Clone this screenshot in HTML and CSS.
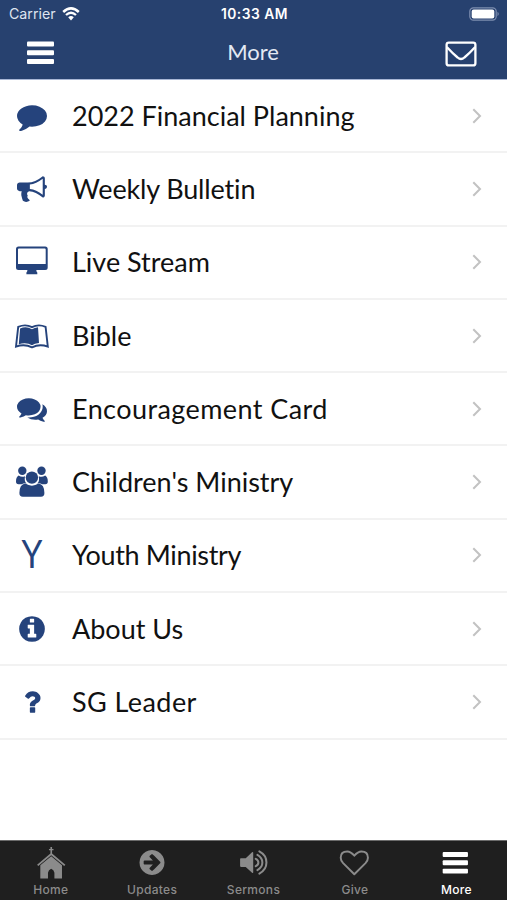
FILE: index.html
```
<!DOCTYPE html>
<html lang="en">
<head>
  <meta charset="UTF-8">
  <meta name="viewport" content="width=device-width, initial-scale=1.0">
  <title>More</title>
  <link rel="stylesheet" href="styles.css">
</head>
<body>
  <div class="app">
    <header class="header">
      <!-- Status bar -->
      <div class="status-bar">
        <div class="carrier">
          <span>Carrier</span>
          <svg class="wifi" viewBox="0 0 18 14" width="18" height="14">
            <path d="M1.2 5Q9-2.2 16.8 5" fill="none" stroke="currentColor" stroke-width="2.5"/>
            <path d="M4 8Q9 3.4 14 8" fill="none" stroke="currentColor" stroke-width="2.3"/>
            <path d="M6.2 10.3Q9 7.8 11.8 10.3L9 13.4z" fill="currentColor"/>
          </svg>
        </div>
        <span class="time">10:33 AM</span>
        <svg class="battery" viewBox="0 0 31 14" width="31" height="14">
          <rect x="0.8" y="0.8" width="26.4" height="12.4" rx="3.6" fill="none" stroke="#7e8eb0" stroke-width="1.2"/>
          <rect x="2.7" y="2.5" width="22.6" height="9" rx="2" fill="#fff"/>
          <path d="M28.5 4.8Q31 7 28.5 9.2z" fill="#7e8eb0"/>
        </svg>
      </div>
      <!-- Navigation bar -->
      <div class="nav-bar">
        <svg class="menu-icon" viewBox="0 0 27 24" width="27" height="24">
          <rect x="0" y="0.5" width="27" height="5" rx="1"/>
          <rect x="0" y="9.2" width="27" height="5" rx="1"/>
          <rect x="0" y="18" width="27" height="5" rx="1"/>
        </svg>
        <h1 class="title">More</h1>
        <svg class="mail-icon" viewBox="0 0 32 26" width="32" height="26" fill="none" stroke="#fff" stroke-width="2.3">
          <rect x="1.6" y="1.6" width="28.8" height="22.8" rx="2.2"/>
          <path d="M1.8 6C5 9.500 9 13.500 12.600 16.500Q16 19.500 19.400 16.500C23 13.500 27 9.500 30.200 6"/>
        </svg>
      </div>
    </header>

    <ul class="menu">
      <li class="menu-item">
        <span class="item-icon"><svg viewBox="0 0 1792 1792" width="30" height="30"><path d="M1792 896q0 174-120 321.500t-326 233-450 85.500q-70 0-145-8-198 175-460 242-49 14-114 22-17 2-30.500-9t-17.500-29v-1q-3-4-.5-12t2-10 4.500-9.500l6-9 7-8.500 8-9q7-8 31-34.500t34.500-38 31-39.500 32.500-51 27-59 26-76q-157-89-247.500-220t-90.500-281q0-130 71-248.500t191-204.500 286-136.500 348-50.500q244 0 450 85.500t326 233 120 321.500z"/></svg></span>
        <span class="label">2022 Financial Planning</span>
        <svg class="chevron" viewBox="0 0 10 16" width="10" height="16"><path d="M1.300 1.300L8 8l-6.700 6.700"/></svg>
      </li>
      <li class="menu-item">
        <span class="item-icon"><svg viewBox="0 0 1792 1792" width="30" height="30"><path d="M1664 640q53 0 90.500 37.500t37.500 90.500-37.500 90.500-90.500 37.500v384q0 52-38 90t-90 38q-417-347-812-380-58 19-91 66t-31 100.500 40 92.500q-20 33-23 65.500t6 58 33.500 55 48 50 61.500 50.500q-29 58-111.500 83t-168.500 11.500-132-55.500q-7-23-29.500-87.500t-32-94.500-23-89-15-101 3.500-98.500 22-110.500h-122q-66 0-113-47t-47-113v-192q0-66 47-113t113-47h480q435 0 896-384 52 0 90 38t38 90v384zm-128 604v-954q-394 302-768 343v270q377 42 768 341z"/></svg></span>
        <span class="label tight">Weekly Bulletin</span>
        <svg class="chevron" viewBox="0 0 10 16" width="10" height="16"><path d="M1.300 1.300L8 8l-6.700 6.700"/></svg>
      </li>
      <li class="menu-item">
        <span class="item-icon"><svg viewBox="0 0 36 36" width="36" height="36"><path fill-rule="evenodd" d="M4.500 2.500h26.700q2.500 0 2.500 2.500v18.600q0 2.500-2.500 2.500h-8.900q0 1.800 1 2.400v1.700H12.400v-1.700q1-.6 1-2.400H4.500Q2 26.100 2 23.600V5q0-2.500 2.500-2.500zM4.900 4.500Q4 4.500 4 5.400V20h27.700V5.400q0-.9-.9-.9z"/></svg></span>
        <span class="label">Live Stream</span>
        <svg class="chevron" viewBox="0 0 10 16" width="10" height="16"><path d="M1.300 1.300L8 8l-6.700 6.700"/></svg>
      </li>
      <li class="menu-item">
        <span class="item-icon"><svg viewBox="0 0 36 36" width="36" height="36">
          <path d="M4.200 8.900Q11.500 5.700 18 9.200Q24.500 5.700 31.600 8.900L33.800 28.600Q25.500 25.600 18 29.300Q10.500 25.600 2 28.600z" fill="none" stroke="#25437c" stroke-width="1.900"/>
          <path d="M6.100 10.500Q12.500 7.900 18 11.300Q20.500 9.700 24 9.300L25 25Q20.500 25.200 18 27.300Q12.500 24 4.800 26.200z"/>
        </svg></span>
        <span class="label">Bible</span>
        <svg class="chevron" viewBox="0 0 10 16" width="10" height="16"><path d="M1.300 1.300L8 8l-6.700 6.700"/></svg>
      </li>
      <li class="menu-item">
        <span class="item-icon"><svg viewBox="0 0 1792 1792" width="30" height="30"><path d="M1408 768q0 139-94 257t-256.500 186.500-353.500 68.500q-86 0-176-16-124 88-278 128-36 9-86 16h-3q-11 0-20.500-8t-11.500-21q-1-3-1-6.500t.5-6.500 2-6l2.500-5 3.500-5.500 4-5 4.500-5 4-4.500q5-6 23-25t26-29.500 22.500-29 25-38.500 20.500-44q-124-72-195-177t-71-224q0-139 94-257t256.500-186.500 353.500-68.500 353.500 68.500 256.500 186.500 94 257zm384 256q0 120-71 224.500t-195 176.500q10 24 20.500 44t25 38.500 22.500 29 26 29.500 23 25q1 1 4 4.500t4.500 5 4 5 3.500 5.500l2.500 5 2 6 .5 6.500-1 6.500q-3 14-13 22t-22 7q-50-7-86-16-154-40-278-128-90 16-176 16-271 0-472-132 58 4 88 4 161 0 309-45t264-129q125-92 192-212t67-254q0-77-23-152 129 71 204 178t75 230z"/></svg></span>
        <span class="label wide">Encouragement Card</span>
        <svg class="chevron" viewBox="0 0 10 16" width="10" height="16"><path d="M1.300 1.300L8 8l-6.700 6.700"/></svg>
      </li>
      <li class="menu-item">
        <span class="item-icon"><svg viewBox="0 0 36 36" width="36" height="36">
          <circle cx="8.300" cy="6.800" r="4.200"/>
          <circle cx="27.500" cy="6.800" r="4.200"/>
          <path d="M4.600 11.600Q8 13.600 11 12.200Q10 18 12.800 19.500Q10.500 18.800 7.500 20.300H4.500Q2 20.300 2 17.500Q2 13 4.600 11.600zM31.200 11.600Q27.800 13.600 24.800 12.200Q25.800 18 23 19.500Q25.300 18.800 28.300 20.300H31.300Q33.800 20.300 33.800 17.500Q33.800 13 31.200 11.600z"/>
          <circle cx="17.900" cy="13.600" r="6.200"/>
          <path d="M11.200 19.600Q17.900 23.700 24.600 19.600Q30.400 20.600 30.400 29Q30.400 32.800 27 32.800H8.800Q5.400 32.800 5.400 29Q5.400 20.600 11.200 19.600z"/>
        </svg></span>
        <span class="label">Children's Ministry</span>
        <svg class="chevron" viewBox="0 0 10 16" width="10" height="16"><path d="M1.300 1.300L8 8l-6.700 6.700"/></svg>
      </li>
      <li class="menu-item">
        <span class="item-icon letter">Y</span>
        <span class="label tighter">Youth Ministry</span>
        <svg class="chevron" viewBox="0 0 10 16" width="10" height="16"><path d="M1.300 1.300L8 8l-6.700 6.700"/></svg>
      </li>
      <li class="menu-item">
        <span class="item-icon"><svg viewBox="0 0 1792 1792" width="30" height="30"><path d="M1152 1376v-160q0-14-9-23t-23-9h-96v-512q0-14-9-23t-23-9h-320q-14 0-23 9t-9 23v160q0 14 9 23t23 9h96v320h-96q-14 0-23 9t-9 23v160q0 14 9 23t23 9h448q14 0 23-9t9-23zm-128-896v-160q0-14-9-23t-23-9h-192q-14 0-23 9t-9 23v160q0 14 9 23t23 9h192q14 0 23-9t9-23zm640 416q0 209-103 385.500t-279.500 279.500-385.500 103-385.500-103-279.500-279.500-103-385.500 103-385.500 279.500-279.500 385.500-103 385.500 103 279.500 279.500 103 385.500z"/></svg></span>
        <span class="label">About Us</span>
        <svg class="chevron" viewBox="0 0 10 16" width="10" height="16"><path d="M1.300 1.300L8 8l-6.700 6.700"/></svg>
      </li>
      <li class="menu-item">
        <span class="item-icon"><svg viewBox="0 0 1792 1792" width="30" height="30"><path d="M1088 1256v240q0 16-12 28t-28 12h-240q-16 0-28-12t-12-28v-240q0-16 12-28t28-12h240q16 0 28 12t12 28zm316-600q0 54-15.500 101t-35 76.500-55 59.500-57.500 43.500-61 35.500q-41 23-68.500 65t-27.500 67q0 17-12 32.500t-28 15.500h-240q-15 0-25.500-18.500t-10.500-37.500v-45q0-83 65-156.500t143-108.500q59-27 84-56t25-76q0-42-46.500-74t-107.500-32q-65 0-108 29-35 25-107 115-13 16-31 16-12 0-25-8l-164-125q-13-10-15.500-25t5.500-28q160-266 464-266 80 0 161 31t146 83 106 127.500 41 158.500z"/></svg></span>
        <span class="label wide">SG Leader</span>
        <svg class="chevron" viewBox="0 0 10 16" width="10" height="16"><path d="M1.300 1.300L8 8l-6.700 6.700"/></svg>
      </li>
    </ul>

    <!-- Bottom tabs -->
    <nav class="tab-bar">
      <a class="tab">
        <svg viewBox="0 0 36 36" width="36" height="36">
          <path d="M17.400 2h1.700v2h1.500v1.500h-1.500v3.300L32.800 20.300l-1.200 1.300L18.200 10.500L4.900 21.600l-1.200-1.300L17.400 8.800V5.500h-1.500V4h1.500z"/>
          <path d="M18.200 11.500L29.300 20.800V34.500H21.500V28.500Q21 25.800 18.200 24.500Q15.400 25.800 14.900 28.500V34.500H7V20.800z"/>
        </svg>
        <span>Home</span>
      </a>
      <a class="tab">
        <svg viewBox="-179 -179 2150 2150" width="36" height="36"><path d="M1413 896q0-27-18-45l-362-362-91-91q-18-18-45-18t-45 18l-91 91q-18 18-18 45t18 45l189 189h-502q-26 0-45 19t-19 45v128q0 26 19 45t45 19h502l-189 189q-19 19-19 45t19 45l91 91q18 18 45 18t45-18l91-91 362-362q18-18 18-45zm251 0q0 209-103 385.500t-279.500 279.500-385.500 103-385.500-103-279.500-279.500-103-385.500 103-385.500 279.500-279.500 385.500-103 385.500 103 279.500 279.500 103 385.500z"/></svg>
        <span>Updates</span>
      </a>
      <a class="tab">
        <svg viewBox="0 0 36 36" width="36" height="36">
          <path d="M4.500 13.500h5l6.500-6q1.200-.8 1.200.5v20q0 1.300-1.200.5l-6.500-6h-5q-.8 0-.8-.8v-7.400q0-.8.800-.8z"/>
          <path d="M19.800 14.200Q22.500 15.500 22.500 18T19.800 21.800M21.500 10.200Q26.600 13 26.600 18T21.500 25.800M23.500 6.600Q30.800 10.500 30.800 18T23.500 29.400" fill="none" stroke="#8b8b8b" stroke-width="2.100" stroke-linecap="round"/>
        </svg>
        <span>Sermons</span>
      </a>
      <a class="tab">
        <svg viewBox="0 0 36 36" width="36" height="36"><path d="M17.300 30.100L5.800 18.700Q3.300 16 3.300 13Q3.300 6.700 10 6.700Q13.600 6.700 17.300 11Q21 6.700 24.600 6.700Q31.300 6.700 31.300 13Q31.300 16 28.800 18.700z" fill="none" stroke="#8b8b8b" stroke-width="2" stroke-linejoin="round"/></svg>
        <span>Give</span>
      </a>
      <a class="tab active">
        <svg viewBox="0 0 36 36" width="36" height="36">
          <rect x="4.300" y="7.300" width="26" height="5" rx="1"/>
          <rect x="4.300" y="15.700" width="26" height="5" rx="1"/>
          <rect x="4.300" y="24.300" width="26" height="5" rx="1"/>
        </svg>
        <span>More</span>
      </a>
    </nav>
  </div>
</body>
</html>
```
FILE: styles.css
```
* {
  box-sizing: border-box;
}
body {
  margin: 0;
  font-family: Lato, sans-serif;
  background-color: #fff;
}
.app {
  display: flex;
  flex-direction: column;
  height: 900px;
  overflow: hidden;
}
.header {
  height: 80px;
  background-color: #27416f;
  border-bottom: 1px solid #a9b7d6;
  color: #fff;
}
.status-bar {
  display: grid;
  grid-template-columns: 1fr auto 1fr;
  align-items: center;
  height: 27px;
  padding: 0 7px 0 9px;
  font-family: Inter, sans-serif;
  font-size: 14.2px;
}
.carrier {
  display: flex;
  align-items: center;
  gap: 6px;
  color: #dfe5f0;
}
.wifi {
  color: #fff;
}
.time {
  font-size: 13.8px;
  font-weight: 600;
  letter-spacing: 0.5px;
}
.battery {
  justify-self: end;
}
.nav-bar {
  display: grid;
  grid-template-columns: 1fr auto 1fr;
  align-items: center;
  height: 52px;
  padding: 0 30px 0 27px;
}
.menu-icon {
  fill: #fff;
}
.mail-icon {
  justify-self: end;
  margin-top: 1px;
}
.title {
  margin: 0;
  padding: 0 0 3px 2px;
  font-size: 22px;
  font-weight: 400;
  color: #e4e9f3;
}
.menu {
  flex: 1;
  margin: 0;
  padding: 0;
  list-style: none;
}
.menu-item {
  display: flex;
  align-items: center;
  height: 73.3px;
  padding-right: 25px;
  border-bottom: 2px solid #f2f2f2;
}
.item-icon {
  display: flex;
  align-items: center;
  justify-content: center;
  width: 64px;
  fill: #25437c;
}
.letter {
  padding-bottom: 4px;
  font-size: 38px;
  line-height: 1;
  color: #25437c;
  transform: scaleX(0.88);
}
.label {
  flex: 1;
  margin-left: 8px;
  padding-bottom: 1px;
  font-size: 27px;
  font-variant-ligatures: none;
  color: #111;
  white-space: nowrap;
}
.label.wide {
  letter-spacing: 0.42px;
}
.label.tight {
  letter-spacing: -0.15px;
}
.label.tighter {
  letter-spacing: -0.35px;
}
.chevron {
  fill: none;
  stroke: #c2c2c2;
  stroke-width: 2;
}
.tab-bar {
  display: flex;
  height: 60px;
  background-color: #1f1f1f;
  border-top: 1px solid #6b6b6b;
}
.tab {
  flex: 1;
  display: flex;
  flex-direction: column;
  align-items: center;
  padding-top: 4px;
  font-family: Inter, sans-serif;
  font-size: 12px;
  font-weight: 500;
  letter-spacing: 0.3px;
  line-height: 20px;
  color: #8b8b8b;
  fill: #8b8b8b;
}
.tab.active {
  color: #fff;
  fill: #fff;
}
```
